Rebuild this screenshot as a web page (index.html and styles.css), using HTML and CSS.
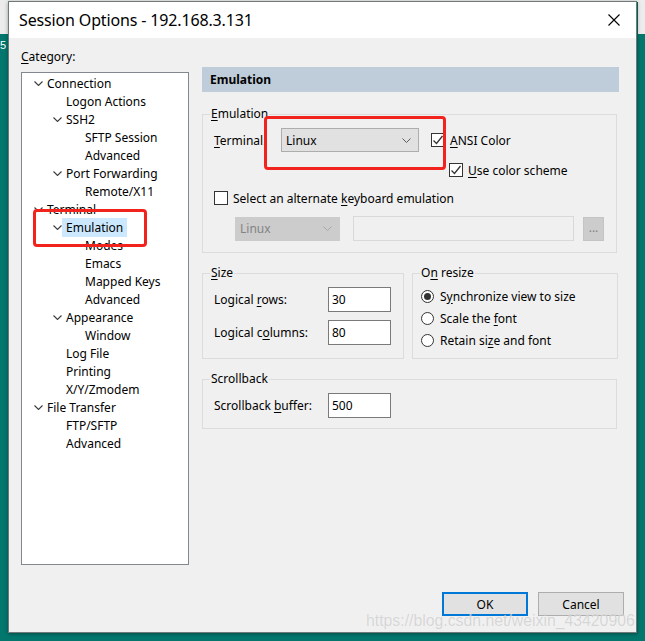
FILE: index.html
```html
<!DOCTYPE html>
<html lang="en">
<head>
<meta charset="utf-8">
<title>Session Options - 192.168.3.131</title>
<link rel="stylesheet" href="styles.css">
</head>
<body>
<div class="desktop">
  <span class="desk-glyph">5</span>
  <div class="dialog">
    <div class="titlebar">
      <span class="title">Session Options - 192.168.3.131</span>
      <svg class="close" width="12" height="12" viewBox="0 0 12 12"><path d="M0.5 0.5L11.5 11.5M11.5 0.5L0.5 11.5" stroke="#000" stroke-width="1.1" fill="none"/></svg>
    </div>
    <div class="content">
      <div class="main">
        <div class="left">
          <div class="cat-label"><u>C</u>ategory:</div>
          <div class="tree">
            <div class="node l0"><svg class="tw" width="9" height="5" viewBox="0 0 9 5"><path d="M0.5 0.5L4.5 4.5L8.5 0.5"/></svg><span>Connection</span></div>
            <div class="node l1"><span class="tw-sp"></span><span>Logon Actions</span></div>
            <div class="node l1"><svg class="tw" width="9" height="5" viewBox="0 0 9 5"><path d="M0.5 0.5L4.5 4.5L8.5 0.5"/></svg><span>SSH2</span></div>
            <div class="node l2"><span class="tw-sp"></span><span>SFTP Session</span></div>
            <div class="node l2"><span class="tw-sp"></span><span>Advanced</span></div>
            <div class="node l1"><svg class="tw" width="9" height="5" viewBox="0 0 9 5"><path d="M0.5 0.5L4.5 4.5L8.5 0.5"/></svg><span>Port Forwarding</span></div>
            <div class="node l2"><span class="tw-sp"></span><span>Remote/X11</span></div>
            <div class="node l0"><svg class="tw" width="9" height="5" viewBox="0 0 9 5"><path d="M0.5 0.5L4.5 4.5L8.5 0.5"/></svg><span>Terminal</span></div>
            <div class="node l1"><svg class="tw" width="9" height="5" viewBox="0 0 9 5"><path d="M0.5 0.5L4.5 4.5L8.5 0.5"/></svg><span class="sel">Emulation</span></div>
            <div class="node l2"><span class="tw-sp"></span><span>Modes</span></div>
            <div class="node l2"><span class="tw-sp"></span><span>Emacs</span></div>
            <div class="node l2"><span class="tw-sp"></span><span>Mapped Keys</span></div>
            <div class="node l2"><span class="tw-sp"></span><span>Advanced</span></div>
            <div class="node l1"><svg class="tw" width="9" height="5" viewBox="0 0 9 5"><path d="M0.5 0.5L4.5 4.5L8.5 0.5"/></svg><span>Appearance</span></div>
            <div class="node l2"><span class="tw-sp"></span><span>Window</span></div>
            <div class="node l1"><span class="tw-sp"></span><span>Log File</span></div>
            <div class="node l1"><span class="tw-sp"></span><span>Printing</span></div>
            <div class="node l1"><span class="tw-sp"></span><span>X/Y/Zmodem</span></div>
            <div class="node l0"><svg class="tw" width="9" height="5" viewBox="0 0 9 5"><path d="M0.5 0.5L4.5 4.5L8.5 0.5"/></svg><span>File Transfer</span></div>
            <div class="node l1"><span class="tw-sp"></span><span>FTP/SFTP</span></div>
            <div class="node l1"><span class="tw-sp"></span><span>Advanced</span></div>
          </div>
        </div>
        <div class="right">
          <div class="panel-head">Emulation</div>

          <fieldset class="group g-emu">
            <legend><u>E</u>mulation</legend>
            <div class="row r-term">
              <span class="lbl lbl-term"><u>T</u>erminal:</span>
              <div class="combo c-term"><span>Linux</span><svg width="9" height="5" viewBox="0 0 9 5"><path d="M0.5 0.5L4.5 4.5L8.5 0.5"/></svg></div>
              <span class="cb checked"><svg width="12" height="12" viewBox="0 0 12 12"><path d="M1.5 6.5L4.5 9.5L10.5 2"/></svg></span>
              <span class="cb-lbl"><u>A</u>NSI Color</span>
            </div>
            <div class="row r-scheme">
              <span class="cb checked"><svg width="12" height="12" viewBox="0 0 12 12"><path d="M1.5 6.5L4.5 9.5L10.5 2"/></svg></span>
              <span class="cb-lbl"><u>U</u>se color scheme</span>
            </div>
            <div class="row r-alt">
              <span class="cb"></span>
              <span class="cb-lbl">Select an alternate <u>k</u>eyboard emulation</span>
            </div>
            <div class="row r-dis">
              <div class="combo c-dis"><span>Linux</span><svg width="9" height="5" viewBox="0 0 9 5"><path d="M0.5 0.5L4.5 4.5L8.5 0.5"/></svg></div>
              <div class="field-dis"></div>
              <div class="btn-dots">...</div>
            </div>
          </fieldset>

          <div class="pair">
            <fieldset class="group g-size">
              <legend><u>S</u>ize</legend>
              <div class="row r-in first">
                <span class="lbl lbl-in">Logical <u>r</u>ows:</span>
                <input class="num" type="text" value="30">
              </div>
              <div class="row r-in">
                <span class="lbl lbl-in">Logical c<u>o</u>lumns:</span>
                <input class="num" type="text" value="80">
              </div>
            </fieldset>
            <fieldset class="group g-resize">
              <legend>O<u>n</u> resize</legend>
              <div class="row r-radio first"><span class="rd on"></span><span>S<u>y</u>nchronize view to size</span></div>
              <div class="row r-radio"><span class="rd"></span><span>Scale the <u>f</u>ont</span></div>
              <div class="row r-radio"><span class="rd"></span><span>Retain si<u>z</u>e and font</span></div>
            </fieldset>
          </div>

          <fieldset class="group g-scroll">
            <legend>Scrollback</legend>
            <div class="row r-in first">
              <span class="lbl lbl-in">Scrollback <u>b</u>uffer:</span>
              <input class="num" type="text" value="500">
            </div>
          </fieldset>
        </div>
      </div>
      <div class="footer">
        <button class="btn ok" type="button">OK</button>
        <button class="btn" type="button">Cancel</button>
      </div>
    </div>
  </div>
  <div class="mark mark-tree"></div>
  <div class="mark mark-term"></div>
  <div class="watermark">https://blog.csdn.net/weixin_43420906</div>
</div>
</body>
</html>
```

FILE: styles.css
```css
* { box-sizing: border-box; }
html, body { margin: 0; padding: 0; }
body {
  width: 645px;
  height: 641px;
  overflow: hidden;
  font-family: "Noto Sans", "Segoe UI", sans-serif;
  font-size: 12px;
  color: #000;
  background: linear-gradient(#ececec 0, #ececec 34px, #03776e 34px);
}
u { text-decoration: underline; text-underline-offset: 2px; }

.desktop {
  position: relative;
  width: 645px;
  height: 641px;
  padding: 1px 0 0 8px;
}
.desk-glyph {
  position: absolute;
  left: 0;
  top: 39px;
  color: #fff;
  font-size: 11px;
  line-height: 12px;
  font-family: "Liberation Sans", sans-serif;
}

.dialog {
  width: 629px;
  height: 632px;
  border: 1px solid #707a78;
  background: #f0f0f0;
  box-shadow: 1px 1px 0 #045c55, 0 1px 4px rgba(0, 0, 0, 0.35);
  display: flex;
  flex-direction: column;
  position: relative;
}

.titlebar {
  height: 36px;
  flex: none;
  background: #fff;
  display: flex;
  align-items: center;
  justify-content: space-between;
  padding: 0 16px 0 10px;
}
.title { font-size: 16px; letter-spacing: -0.15px; margin-top: -1px; }

.content {
  flex: 1;
  display: flex;
  flex-direction: column;
  padding: 11px 12px 16px 12px;
}
.main { display: flex; gap: 13px; }

.left { width: 168px; flex: none; }
.cat-label { height: 16px; line-height: 16px; margin-bottom: 7px; }
.tree {
  height: 493px;
  border: 1px solid #828790;
  background: #fff;
  padding-top: 1px;
}
.node {
  height: 18px;
  display: flex;
  align-items: center;
  white-space: nowrap;
}
.node.l0 { padding-left: 8px; }
.node.l1 { padding-left: 27px; }
.node.l2 { padding-left: 46px; }
.tw { width: 17px; height: 5px; flex: none; margin-top: 1px; }
.tw path { fill: none; stroke: #3c3c3c; stroke-width: 1.1; }
.tw-sp { width: 17px; flex: none; }
.sel {
  background: #cce8ff;
  margin-left: -4px;
  padding: 0 4px;
  line-height: 19px;
}

.right { width: 417px; flex: none; margin-top: 18px; }
.panel-head {
  height: 25px;
  line-height: 25px;
  background: #bfcddb;
  font-weight: bold;
  padding-left: 8px;
}

.group {
  margin: 0;
  padding: 0;
  border: 1px solid #dcdcdc;
  min-width: 0;
}
.group legend {
  margin-left: 7px;
  padding: 0 1px;
  line-height: 16px;
  height: 16px;
}
.row { display: flex; align-items: center; white-space: nowrap; }

.g-emu { margin: 14px 2px 0 0; padding-bottom: 11px; }
.r-term { margin-top: 6px; height: 24px; padding-left: 11px; }
.lbl-term { width: 67px; }
.combo {
  height: 24px;
  display: flex;
  align-items: center;
  justify-content: space-between;
  padding: 0 7px 0 4px;
}
.combo svg path { fill: none; stroke: #5a5a5a; stroke-width: 1; }
.c-term { width: 138px; background: #e1e1e1; border: 1px solid #adadad; }
.c-dis { width: 105px; background: #cccccc; border: 1px solid #cccccc; color: #838383; }
.c-dis svg path { stroke: #a6a6a6; }
.cb {
  width: 14px;
  height: 14px;
  flex: none;
  border: 1px solid #333;
  background: #fff;
  display: flex;
  align-items: center;
  justify-content: center;
}
.cb svg path { fill: none; stroke: #333; stroke-width: 1.3; }
.r-term .cb { margin-left: 12px; }
.cb-lbl { margin-left: 5px; }
.r-scheme { margin-top: 8px; height: 20px; padding-left: 246px; }
.r-alt { margin-top: 8px; height: 20px; padding-left: 11px; }
.r-dis { margin-top: 8px; height: 25px; padding-left: 32px; }
.field-dis {
  width: 221px;
  height: 25px;
  margin-left: 13px;
  border: 1px solid #d9d9d9;
  background: #f0f0f0;
}
.btn-dots {
  width: 21px;
  height: 24px;
  margin-left: 9px;
  background: #cccccc;
  border: 1px solid #c4c4c4;
  color: #838383;
  text-align: center;
  line-height: 20px;
}

.pair { display: flex; gap: 8px; margin-top: 12px; }
.g-size { width: 202px; padding-bottom: 13px; }
.g-resize { width: 206px; }
.r-in { height: 25px; margin-top: 8px; padding-left: 11px; }
.r-in.first { margin-top: 6px; }
.lbl-in { width: 114px; }
.num {
  width: 63px;
  height: 25px;
  border: 1px solid #7a7a7a;
  background: #fff;
  font: inherit;
  color: #000;
  padding: 0 3px;
  margin: 0;
  outline: none;
}
.r-radio { height: 22px; padding-left: 8px; }
.r-radio.first { margin-top: 4px; }
.rd {
  width: 13px;
  height: 13px;
  flex: none;
  border: 1px solid #333;
  border-radius: 50%;
  background: #fff;
  margin-right: 6px;
  display: flex;
  align-items: center;
  justify-content: center;
}
.rd.on::after {
  content: "";
  width: 7px;
  height: 7px;
  border-radius: 50%;
  background: #333;
}

.g-scroll { margin: 12px 2px 0 0; padding-bottom: 10px; }
.g-scroll .r-in.first { margin-top: 6px; }

.footer {
  margin-top: auto;
  display: flex;
  justify-content: flex-end;
  gap: 10px;
}
.btn {
  width: 86px;
  height: 24px;
  margin: 0;
  padding: 0;
  font: inherit;
  color: #000;
  background: #e1e1e1;
  border: 1px solid #adadad;
}
.btn.ok { border: 2px solid #0078d7; }

.mark {
  position: absolute;
  border: 3px solid #f2231c;
  border-radius: 4px;
}
.mark-tree { left: 33px; top: 209px; width: 114px; height: 38px; }
.mark-term { left: 264px; top: 116px; width: 182px; height: 54px; }

.watermark {
  position: absolute;
  left: 366px;
  top: 612px;
  font-family: "Liberation Sans", sans-serif;
  font-size: 15.8px;
  color: rgba(190, 190, 190, 0.6);
  text-shadow: 0 0 1px rgba(255, 255, 255, 0.7);
  white-space: nowrap;
}
```
